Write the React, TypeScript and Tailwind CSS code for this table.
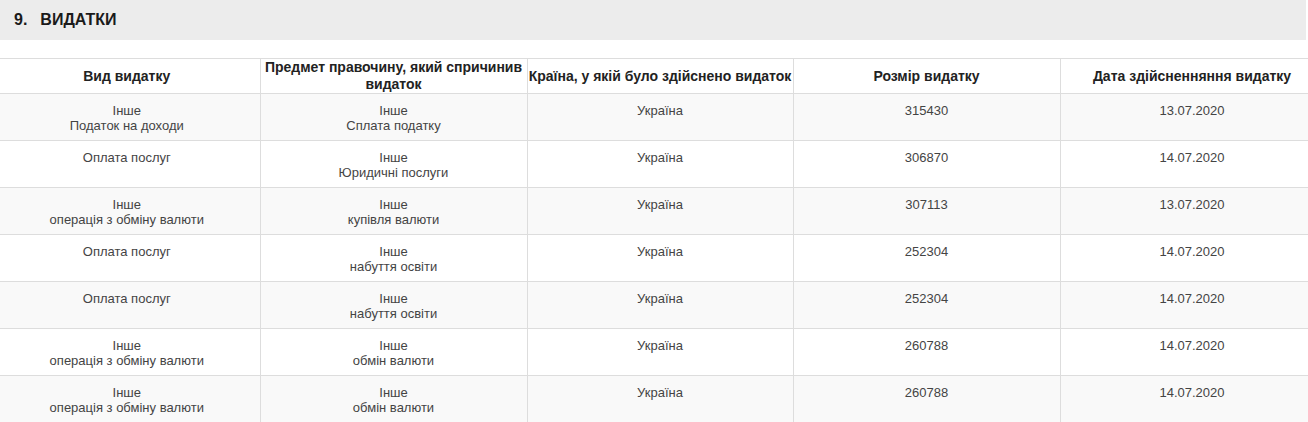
const rows: [string[], string[], string, string, string][] = [
  [["Інше", "Податок на доходи"], ["Інше", "Сплата податку"], "Україна", "315430", "13.07.2020"],
  [["Оплата послуг"], ["Інше", "Юридичні послуги"], "Україна", "306870", "14.07.2020"],
  [["Інше", "операція з обміну валюти"], ["Інше", "купівля валюти"], "Україна", "307113", "13.07.2020"],
  [["Оплата послуг"], ["Інше", "набуття освіти"], "Україна", "252304", "14.07.2020"],
  [["Оплата послуг"], ["Інше", "набуття освіти"], "Україна", "252304", "14.07.2020"],
  [["Інше", "операція з обміну валюти"], ["Інше", "обмін валюти"], "Україна", "260788", "14.07.2020"],
  [["Інше", "операція з обміну валюти"], ["Інше", "обмін валюти"], "Україна", "260788", "14.07.2020"],
];

const headers = [
  "Вид видатку",
  "Предмет правочину, який спричинив видаток",
  "Країна, у якій було здійснено видаток",
  "Розмір видатку",
  "Дата здійсненняння видатку",
];

export default function App() {
  return (
    <div className="w-[1308px] h-[422px] overflow-hidden bg-white font-['Liberation_Sans',Arial,sans-serif]">
      {/* Section title */}
      <div className="w-[1306px] h-[40px] bg-[#ececec] flex items-center pl-[14px] text-[16px] font-bold text-[#1a1a1a]">
        <span>9.</span>
        <span className="ml-[13px]">ВИДАТКИ</span>
      </div>

      <div className="mt-[18px]">
        <table className="table-fixed border-collapse w-[1330px] ml-[-6px]">
          <colgroup>
            <col className="w-[266px]" />
            <col className="w-[267px]" />
            <col className="w-[266px]" />
            <col className="w-[267px]" />
            <col className="w-[264px]" />
          </colgroup>
          <thead>
            <tr className="h-[35px]">
              {headers.map((h, i) => (
                <th
                  key={i}
                  className={
                    "border border-[#dddddd] text-[14px] leading-[17px] font-bold text-[#222] text-center align-middle px-0 " +
                    (i === 0 ? "border-l-0" : "")
                  }
                >
                  {h}
                </th>
              ))}
            </tr>
          </thead>
          <tbody>
            {rows.map((r, idx) => (
              <tr key={idx} className={idx % 2 === 0 ? "h-[47px] bg-[#f9f9f9]" : "h-[47px] bg-white"}>
                {[r[0], r[1], [r[2]], [r[3]], [r[4]]].map((cell, ci) => (
                  <td
                    key={ci}
                    className={
                      "border border-[#dddddd] align-top text-center text-[13px] leading-[15px] text-[#444] pt-[9px] pb-0 " +
                      (ci === 0 ? "border-l-0" : "")
                    }
                  >
                    {cell.map((line, li) => (
                      <div key={li}>{line}</div>
                    ))}
                  </td>
                ))}
              </tr>
            ))}
          </tbody>
        </table>
      </div>
    </div>
  );
}
